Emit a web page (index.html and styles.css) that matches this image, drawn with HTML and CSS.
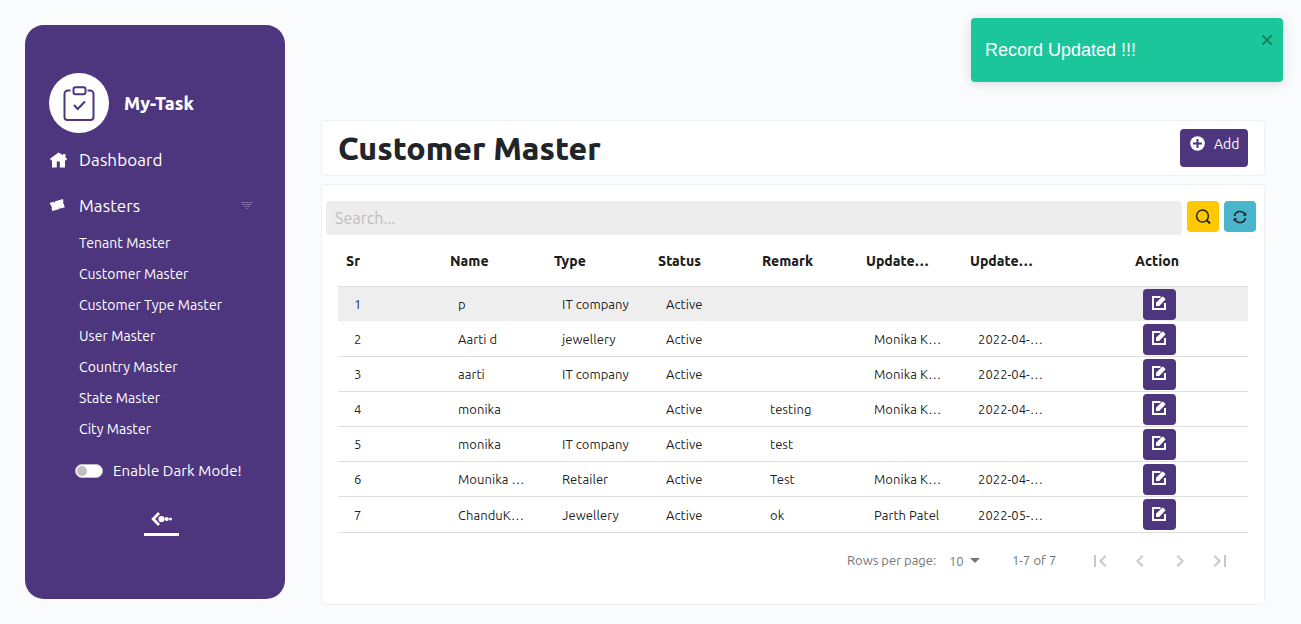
FILE: index.html
```
<!DOCTYPE html>
<html lang="en">
<head>
<meta charset="utf-8">
<title>My-Task</title>
<link rel="stylesheet" href="styles.css">
</head>
<body>
<svg class="defs" width="0" height="0">
  <symbol id="edit" viewBox="0 0 14 14"><path d="M8.500 1H1v12h12V7" fill="none" stroke="#fff" stroke-width="2"/><path d="M4 10V6.800L10.200.8q.5-.5 1 0l2 2q.5.500 0 1L7.200 10z" fill="#fff"/></symbol>
</svg>
<div class="app">
  <aside class="sidebar">
    <div class="brand">
      <span class="logo"><svg width="32" height="36" viewBox="0 0 32 36" fill="none" stroke="#4e367e" stroke-width="2"><path d="M7.500 4.500H5a3.500 3.500 0 0 0-3.500 3.500V31a3 3 0 0 0 3 3h23a3 3 0 0 0 3-3V8A3.500 3.500 0 0 0 27 4.500h-2.500"/><rect x="10.500" y="1.200" width="12" height="7" rx="2"/><path d="M11 19l3.700 4 7.300-7.500"/></svg></span>
      <span class="brand-name">My-Task</span>
    </div>
    <a class="nav"><svg width="18" height="16" viewBox="0 0 18 16" fill="#fff"><path d="M9.500 .5L1 6.800l1 1.700 1-.5V15.500h4.800V9.500h3v6h5.200V8l1 .5 1-1.700-1.500-1.300V2h-2.500v1z"/></svg><span>Dashboard</span></a>
    <a class="nav masters"><svg width="18" height="16" viewBox="0 0 18 16" fill="#fff"><path d="M.6 5l3.900-1.200.8 1.200.5-1.600L13.800 1l.7 2.600q-1.200.9 0 1.900l1.300 3.700-4 1.300-.9-1.200-.3 1.600-7.300 2.100-.8-2.900q1.200-1.100-.2-1.900z"/></svg><span>Masters</span>
      <svg class="caret" width="12" height="7" viewBox="0 0 12 7" stroke="#8b78b2" stroke-dasharray="1.500 .5"><path d="M0 .5h12M1 2.500h10M3 4.500h6M5 6.500h2"/></svg></a>
    <nav class="submenu">
      <a>Tenant Master</a><a>Customer Master</a><a>Customer Type Master</a><a>User Master</a><a>Country Master</a><a>State Master</a><a>City Master</a>
    </nav>
    <div class="dark"><span class="switch"></span><span>Enable Dark Mode!</span></div>
    <div class="collapse"><svg width="22" height="14" viewBox="0 0 22 14"><path d="M8 1L2.200 7l5.800 6" fill="none" stroke="#fff" stroke-width="2.800"/><g fill="#fff"><circle cx="10.500" cy="7" r="3.100"/><circle cx="15.700" cy="7" r="2.100"/><circle cx="19.500" cy="7" r="1.500"/></g></svg></div>
  </aside>
  <main class="main">
    <header class="card head">
      <h1>Customer Master</h1>
      <button class="add"><svg width="15" height="15" viewBox="0 0 15 15"><circle cx="7.500" cy="7.500" r="7.300" fill="#fff"/><path d="M7.500 3v9M3 7.500h9" stroke="#4e367e" stroke-width="2"/></svg><span>Add</span></button>
    </header>
    <section class="card panel">
      <div class="tools">
        <input class="search" placeholder="Search...">
        <button class="tool find"><svg width="16" height="16" viewBox="0 0 16 16" fill="none" stroke="#212529" stroke-width="1.500"><circle cx="7.500" cy="7" r="5.900"/><path d="M11.500 11l3.500 3.500" stroke-width="2"/></svg></button>
        <button class="tool refresh"><svg width="14" height="14" viewBox="0 0 14 14" fill="none" stroke="#212529" stroke-width="1.500"><path d="M1.500 6A5.600 5.600 0 0 1 11.800 4.200M12.500 8A5.600 5.600 0 0 1 2.200 9.800"/><path d="M13.300 2.200v3.600H9.700zM.7 11.800V8.200h3.600z" fill="#212529" stroke="none"/></svg></button>
      </div>
      <div class="table">
        <div class="row thead"><span>Sr</span><span>Name</span><span>Type</span><span>Status</span><span>Remark</span><span>Update…</span><span>Update…</span><span class="act">Action</span></div>
        <div class="row hover"><span>1</span><span>p</span><span>IT company</span><span>Active</span><span></span><span></span><span></span><button class="edit"><svg width="14" height="14"><use href="#edit"/></svg></button></div>
        <div class="row"><span>2</span><span>Aarti d</span><span>jewellery</span><span>Active</span><span></span><span>Monika K…</span><span>2022-04-…</span><button class="edit"><svg width="14" height="14"><use href="#edit"/></svg></button></div>
        <div class="row"><span>3</span><span>aarti</span><span>IT company</span><span>Active</span><span></span><span>Monika K…</span><span>2022-04-…</span><button class="edit"><svg width="14" height="14"><use href="#edit"/></svg></button></div>
        <div class="row"><span>4</span><span>monika</span><span></span><span>Active</span><span>testing</span><span>Monika K…</span><span>2022-04-…</span><button class="edit"><svg width="14" height="14"><use href="#edit"/></svg></button></div>
        <div class="row"><span>5</span><span>monika</span><span>IT company</span><span>Active</span><span>test</span><span></span><span></span><button class="edit"><svg width="14" height="14"><use href="#edit"/></svg></button></div>
        <div class="row"><span>6</span><span>Mounika …</span><span>Retailer</span><span>Active</span><span>Test</span><span>Monika K…</span><span>2022-04-…</span><button class="edit"><svg width="14" height="14"><use href="#edit"/></svg></button></div>
        <div class="row last"><span>7</span><span>ChanduK…</span><span>Jewellery</span><span>Active</span><span>ok</span><span>Parth Patel</span><span>2022-05-…</span><button class="edit"><svg width="14" height="14"><use href="#edit"/></svg></button></div>
      </div>
      <footer class="pager">
        <span class="rpp">Rows per page:</span><span class="size">10</span>
        <svg class="down" width="10" height="5" viewBox="0 0 10 5"><path d="M0 0h10L5 5z" fill="#757575"/></svg>
        <span class="range">1-7 of 7</span>
        <span class="arrows">
          <svg width="24" height="24" viewBox="0 0 24 24"><path d="M18.410 16.590L13.820 12l4.590-4.590L17 6l-6 6 6 6zM6 6h2v12H6z"/></svg>
          <svg width="24" height="24" viewBox="0 0 24 24"><path d="M15.410 7.410L14 6l-6 6 6 6 1.410-1.410L10.830 12z"/></svg>
          <svg width="24" height="24" viewBox="0 0 24 24"><path d="M10 6L8.590 7.410 13.170 12l-4.580 4.590L10 18l6-6z"/></svg>
          <svg width="24" height="24" viewBox="0 0 24 24"><path d="M5.590 7.410L10.180 12l-4.590 4.590L7 18l6-6-6-6zM16 6h2v12h-2z"/></svg>
        </span>
      </footer>
    </section>
  </main>
</div>
<div class="toast"><span>Record Updated !!!</span><svg width="12" height="12" viewBox="0 0 12 12"><path d="M1.500 1.500l9 9M10.500 1.500l-9 9" stroke="#13845f" stroke-width="2"/></svg></div>
</body>
</html>
```
FILE: styles.css
```
* { box-sizing: border-box; }
body { margin: 0; height: 624px; overflow: hidden; background: #fafbfd; color: #212529; font-family: Ubuntu, "Noto Sans", sans-serif; letter-spacing: .05px; }
button { border: 0; padding: 0; font-family: inherit; border-radius: 4px; background: #4e367e; color: #fff; }
svg { display: block; flex: none; }
.defs { position: absolute; }
.app { display: flex; height: 624px; padding: 25px 36px 19px 25px; gap: 36px; }
.sidebar { width: 260px; height: 574px; flex: none; padding: 48px 24px 0; border-radius: 19px; background: #4e367e; color: #fff; }
.brand { display: flex; align-items: center; height: 60px; gap: 15px; }
.logo { display: flex; align-items: center; justify-content: center; width: 60px; height: 60px; padding-top: 1px; border-radius: 50%; background: #fff; }
.brand-name { font-size: 18px; font-weight: 800; letter-spacing: 0; }
.nav { display: flex; align-items: center; height: 46px; margin-top: 4px; gap: 12px; font-size: 17px; letter-spacing: .08px; }
.nav span { padding-bottom: 2px; }
.masters { margin-top: 0; }
.nav svg { width: 18px; }
.nav .caret { width: 12px; margin: 0 8px 2px auto; }
.submenu { display: flex; flex-direction: column; padding: 0 0 0 30px; }
.submenu a { height: 31px; line-height: 31px; font-size: 14px; letter-spacing: .06px; }
.nav + .submenu { margin-top: -1px; }
.dark { display: flex; align-items: center; margin: 15px 0 0 26px; height: 20px; gap: 10px; font-size: 15px; letter-spacing: .1px; white-space: nowrap; }
.switch { display: flex; align-items: center; width: 28px; height: 14px; margin-top: 1px; border: 1px solid #bfbfbf; border-radius: 7px; background: #fff; padding-left: 1px; }
.switch::before { content: ""; width: 10px; height: 10px; border-radius: 50%; background: #bfbfbf; }
.collapse { display: flex; justify-content: center; width: 35px; height: 25px; margin: 31px 0 0 95px; padding-top: 1px; border-bottom: 3px solid #fff; }
.main { flex: 1; display: flex; flex-direction: column; gap: 8px; padding-top: 95px; min-width: 0; }
.card { border: 1px solid #eeeff1; border-radius: 4px; background: #fff; }
.head { display: flex; justify-content: space-between; height: 56px; padding: 8px 16px; }
h1 { margin: 0; font-size: 32px; line-height: 38px; font-weight: 800; letter-spacing: 0; }
.add { display: flex; gap: 9px; width: 68px; height: 38px; padding: 7px 0 0 10px; font-size: 14px; line-height: 16px; }
.panel { height: 421px; padding: 16px 8px 0 4px; }
.tools { display: flex; height: 34px; gap: 5px; }
.search { flex: 1; min-width: 0; border: 0; border-radius: 4px; padding: 0 9px; background: #ededed; font-family: inherit; font-size: 16px; letter-spacing: .08px; }
.search::placeholder { color: #bdbdbd; opacity: 1; }
.tool { display: flex; align-items: center; justify-content: center; width: 32px; height: 31px; }
.find { background: #ffc800; }
.refresh { background: #49b6cc; }
.table { margin: 0 8px 0 12px; }
.row { display: grid; grid-template-columns: repeat(7, 104px) 1fr; align-items: center; height: 35px; padding-left: 16px; border-bottom: 1px solid #dedede; font-size: 13px; white-space: nowrap; color: rgba(0, 0, 0, .9); }
.thead { height: 52px; padding-left: 8px; font-size: 14px; font-weight: 800; letter-spacing: 0; }
.hover { background: #eee; border-color: #fff; }
.last { height: 36px; }
.act { padding-left: 61px; }
.edit { display: flex; justify-content: center; align-items: center; width: 33px; height: 31px; margin-left: 61px; padding: 0 1px 2px 0; }
.pager { display: flex; align-items: center; height: 56px; padding: 0 0 1px 521px; font-size: 13px; letter-spacing: 0; color: #757575; white-space: nowrap; }
.pager .rpp, .pager .range { padding-bottom: 1px; }
.rpp { width: 102px; }
.size { width: 21px; padding-top: 1px; }
.range { margin-left: 32px; width: 76px; }
.arrows { display: flex; gap: 16px; fill: #c9c9c9; }
.toast { position: absolute; left: 971px; top: 18px; display: flex; justify-content: space-between; width: 312px; height: 64px; padding: 0 10px 0 14px; border-radius: 4px; background: #1bc69a; color: #fff; box-shadow: 0 1px 10px rgba(0,0,0,.1), 0 2px 15px rgba(0,0,0,.05); font: 18px/64px "Liberation Sans", sans-serif; letter-spacing: 0; }
.toast svg { margin-top: 16px; }
```
